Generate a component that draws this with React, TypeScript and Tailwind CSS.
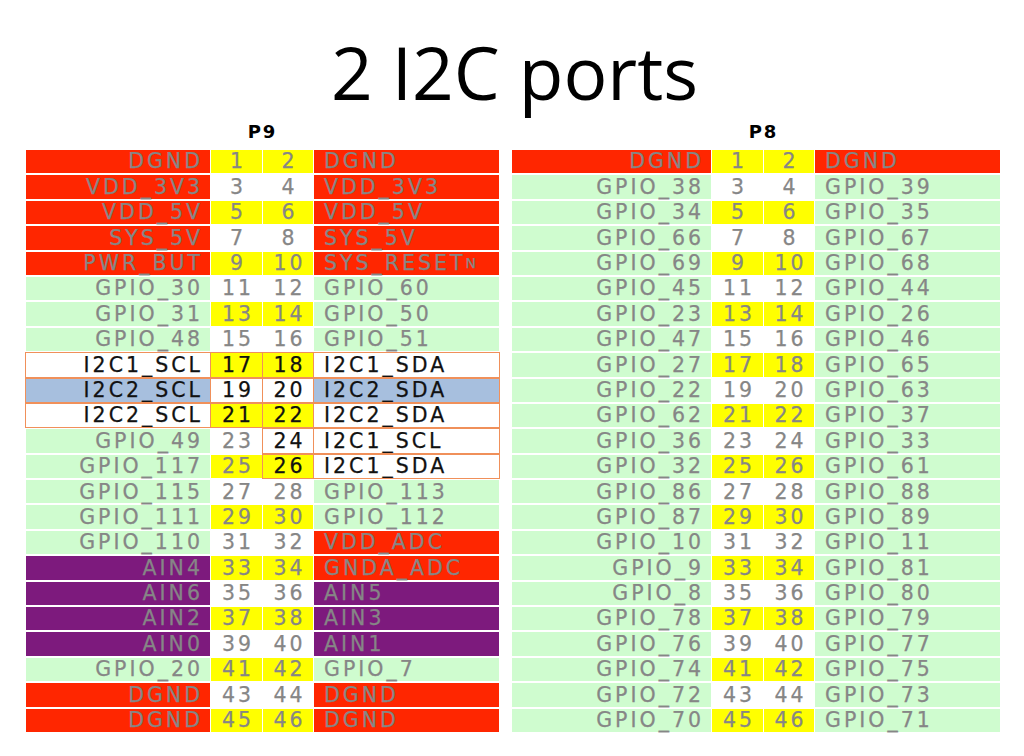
import React from 'react';

type Row = [string, string, string, string, string?, string?];

const BG: Record<string, string> = {
  r: 'bg-[#ff2600]',
  g: 'bg-[#cffccf]',
  y: 'bg-[#ffff00]',
  w: 'bg-white',
  p: 'bg-[#7d1a7d]',
  b: 'bg-[#a7bfde]',
};

const p9: Row[] = [
  ['DGND', 'r', 'DGND', 'r'],
  ['VDD_3V3', 'r', 'VDD_3V3', 'r'],
  ['VDD_5V', 'r', 'VDD_5V', 'r'],
  ['SYS_5V', 'r', 'SYS_5V', 'r'],
  ['PWR_BUT', 'r', 'SYS_RESET', 'r'],
  ['GPIO_30', 'g', 'GPIO_60', 'g'],
  ['GPIO_31', 'g', 'GPIO_50', 'g'],
  ['GPIO_48', 'g', 'GPIO_51', 'g'],
  ['I2C1_SCL', 'w', 'I2C1_SDA', 'w', 'kkkk', 'oooo'],
  ['I2C2_SCL', 'b', 'I2C2_SDA', 'b', 'kkkk', 'oooo'],
  ['I2C2_SCL', 'w', 'I2C2_SDA', 'w', 'kkkk', 'oooo'],
  ['GPIO_49', 'g', 'I2C1_SCL', 'w', '--kk', '--oo'],
  ['GPIO_117', 'g', 'I2C1_SDA', 'w', '--kk', '--oo'],
  ['GPIO_115', 'g', 'GPIO_113', 'g'],
  ['GPIO_111', 'g', 'GPIO_112', 'g'],
  ['GPIO_110', 'g', 'VDD_ADC', 'r'],
  ['AIN4', 'p', 'GNDA_ADC', 'r'],
  ['AIN6', 'p', 'AIN5', 'p'],
  ['AIN2', 'p', 'AIN3', 'p'],
  ['AIN0', 'p', 'AIN1', 'p'],
  ['GPIO_20', 'g', 'GPIO_7', 'g'],
  ['DGND', 'r', 'DGND', 'r'],
  ['DGND', 'r', 'DGND', 'r'],
];

const p8pairs = [
  [38, 39], [34, 35], [66, 67], [69, 68], [45, 44], [23, 26], [47, 46], [27, 65],
  [22, 63], [62, 37], [36, 33], [32, 61], [86, 88], [87, 89], [10, 11], [9, 81],
  [8, 80], [78, 79], [76, 77], [74, 75], [72, 73], [70, 71],
];

const p8: Row[] = [
  ['DGND', 'r', 'DGND', 'r'],
  ...p8pairs.map(([a, b]) => [`GPIO_${a}`, 'g', `GPIO_${b}`, 'g'] as Row),
];

const cellBase = "flex items-center h-full tracking-[3px] text-[20.5px] leading-none whitespace-nowrap [-webkit-text-stroke:0.25px]";

function Cell({ text, bg, black, outline, align }: { text: React.ReactNode; bg: string; black: boolean; outline: boolean; align: 'l' | 'r' | 'c' }) {
  const alignCls = align === 'r' ? 'justify-end pr-[7px]' : align === 'l' ? 'justify-start pl-[10px]' : 'justify-center pl-[3px]';
  return (
    <div
      className={`${cellBase} ${BG[bg]} ${alignCls} ${black ? 'text-[#111111]' : 'text-[#868686]'} ${outline ? 'outline outline-1 outline-[#f0905a]' : ''}`}
    >
      {text}
    </div>
  );
}

function Header({ label, cols, rows }: { label: string; cols: string; rows: Row[] }) {
  return (
    <div className={`grid ${cols} gap-x-[1px]`}>
      <div className="col-start-2 col-span-2 text-center font-bold text-[18px] tracking-[2px] pl-[1px] leading-4 h-4 mt-[16px] mb-[10px]">
        {label}
      </div>
      <div className="col-span-4 grid grid-cols-subgrid auto-rows-[23.4px] gap-y-[2px]">
        {rows.map((r, i) => {
          const [a, ab, b, bb, ink = '----', out = '----'] = r;
          const pinBg = i % 2 === 0 ? 'y' : 'w';
          const n1 = i * 2 + 1;
          const bText = b === 'SYS_RESET' ? (<>SYS_RESET<span className="text-[14px]">N</span></>) : b;
          return (
            <React.Fragment key={i}>
              <Cell text={a} bg={ab} black={ink[0] === 'k'} outline={out[0] === 'o'} align="r" />
              <Cell text={n1} bg={pinBg} black={ink[1] === 'k'} outline={out[1] === 'o'} align="c" />
              <Cell text={n1 + 1} bg={pinBg} black={ink[2] === 'k'} outline={out[2] === 'o'} align="c" />
              <Cell text={bText} bg={bb} black={ink[3] === 'k'} outline={out[3] === 'o'} align="l" />
            </React.Fragment>
          );
        })}
      </div>
    </div>
  );
}

export default function App() {
  return (
    <div className="w-[1024px] h-[756px] bg-white overflow-hidden" style={{ fontFamily: '"DejaVu Sans", sans-serif' }}>
      <h1
        className="text-center text-[73px] leading-none pt-[35px] text-black ml-[5px]"
        style={{ fontFamily: '"Open Sans", sans-serif' }}
      >
        2 I2C ports
      </h1>
      <div className="flex pl-[26px] gap-[13px]">
        <Header label="P9" cols="grid-cols-[184px_51px_50px_185px]" rows={p9} />
        <Header label="P8" cols="grid-cols-[199px_51px_50px_185px]" rows={p8} />
      </div>
    </div>
  );
}
